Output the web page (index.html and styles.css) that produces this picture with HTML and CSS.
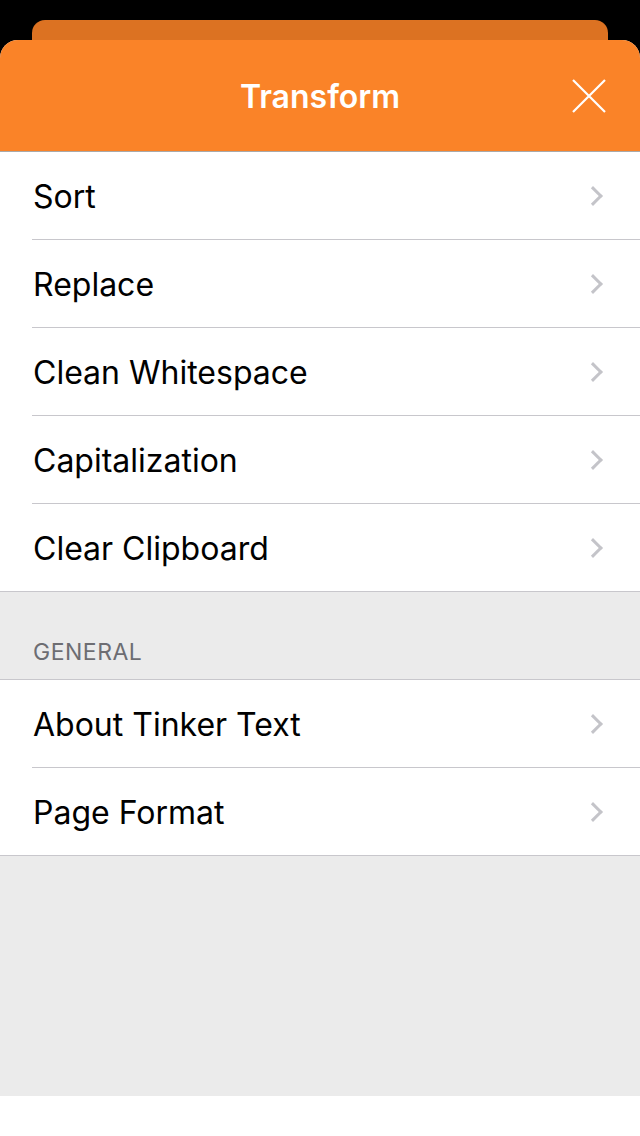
FILE: index.html
```html
<!DOCTYPE html>
<html lang="en">
<head>
  <meta charset="UTF-8">
  <meta name="viewport" content="width=device-width, initial-scale=1.0">
  <title>Transform</title>
  <link rel="stylesheet" href="styles.css">
</head>
<body>
  <div class="screen">
    <div class="back-card"></div>

    <div class="sheet">
      <header class="nav">
        <span></span>
        <h1>Transform</h1>
        <button class="btn-close" aria-label="Close">
          <svg width="34" height="34" viewBox="0 0 34 34">
            <path d="M1 1 L33 33 M33 1 L1 33" stroke="#fff" stroke-width="2.2" fill="none"/>
          </svg>
        </button>
      </header>

      <ul class="group">
        <li class="row"><div class="row-inner"><span>Sort</span><i class="chevron"></i></div></li>
        <li class="row"><div class="row-inner"><span>Replace</span><i class="chevron"></i></div></li>
        <li class="row"><div class="row-inner"><span>Clean Whitespace</span><i class="chevron"></i></div></li>
        <li class="row"><div class="row-inner"><span>Capitalization</span><i class="chevron"></i></div></li>
        <li class="row"><div class="row-inner"><span>Clear Clipboard</span><i class="chevron"></i></div></li>
      </ul>

      <div class="section-title">GENERAL</div>

      <ul class="group group-top">
        <li class="row"><div class="row-inner"><span>About Tinker Text</span><i class="chevron"></i></div></li>
        <li class="row"><div class="row-inner"><span>Page Format</span><i class="chevron"></i></div></li>
      </ul>
    </div>

    <div class="home-strip"></div>
  </div>
</body>
</html>
```

FILE: styles.css
```css
:root {
  --orange: #FA8328;
  --orange-dark: #DC7222;
  --grouped-bg: #EBEBEB;
  --separator: #C8C7CC;
  --chevron: #C4C4C9;
}

body {
  margin: 0;
  background: #000;
  font-family: 'Inter', 'Roboto', sans-serif;
}

.screen {
  height: 1136px;
  padding-top: 20px;
  box-sizing: border-box;
  display: flex;
  flex-direction: column;
}

.back-card {
  height: 20px;
  margin: 0 32px;
  background: var(--orange-dark);
  border-radius: 13px 13px 0 0;
}

.sheet {
  flex: 1;
  background: var(--grouped-bg);
  border-radius: 18px 18px 0 0;
  overflow: hidden;
  display: flex;
  flex-direction: column;
}

.nav {
  height: 111px;
  background: var(--orange);
  border-bottom: 1px solid #A9A9A9;
  display: grid;
  grid-template-columns: 1fr auto 1fr;
  align-items: center;
}

.nav h1 {
  margin: 2px 0 0;
  font-size: 32px;
  font-weight: 600;
  color: #fff;
}

.btn-close {
  justify-self: end;
  margin: 0 34px 0 0;
  padding: 0;
  border: none;
  background: none;
  width: 34px;
  height: 34px;
  cursor: pointer;
}

.btn-close svg {
  display: block;
}

.group {
  list-style: none;
  margin: 0;
  padding: 0;
  background: #fff;
  border-bottom: 1px solid var(--separator);
}

.group-top {
  border-top: 1px solid var(--separator);
}

.row {
  padding-left: 32px;
}

.row-inner {
  height: 87px;
  border-bottom: 1px solid var(--separator);
  display: flex;
  align-items: center;
  justify-content: space-between;
  padding-right: 40px;
  font-size: 32px;
  color: #000;
}

.row:last-child .row-inner {
  border-bottom: none;
}

.row-inner span {
  padding: 2px 0 0 1px;
}

.chevron {
  width: 14px;
  height: 14px;
  border-top: 3px solid var(--chevron);
  border-right: 3px solid var(--chevron);
  transform: rotate(45deg);
  box-sizing: border-box;
}

.section-title {
  height: 87px;
  box-sizing: border-box;
  display: flex;
  align-items: flex-end;
  padding: 0 0 13px 33px;
  font-size: 23px;
  line-height: 28px;
  letter-spacing: 0.5px;
  color: #6D6D72;
}

.home-strip {
  height: 40px;
  background: #fff;
}
```
